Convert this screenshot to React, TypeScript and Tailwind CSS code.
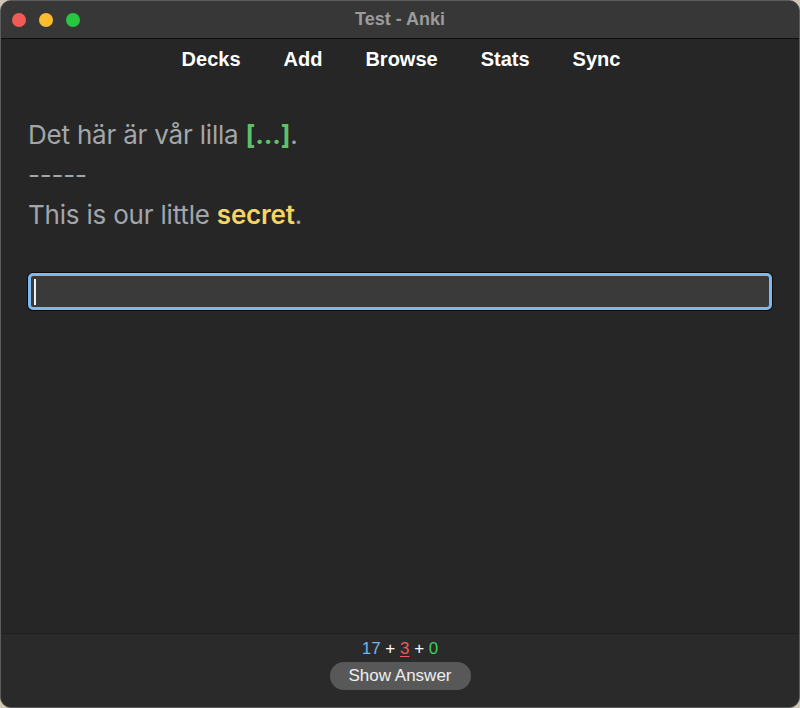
import React from "react";

export default function App() {
  return (
    <div className="w-[800px] h-[708px] bg-[#cfc6b6]">
      <div className="w-[800px] h-[708px] rounded-[11px] overflow-hidden border border-[#5c5c5c] flex flex-col bg-[#262626]">
        {/* Title bar */}
        <div className="h-[38px] shrink-0 bg-[#373737] border-b border-[#0e0e0e] flex items-center relative">
          <div className="flex items-center gap-[13px] pl-[11px]">
            <div className="w-[14px] h-[14px] rounded-full bg-[#f05b56]" />
            <div className="w-[14px] h-[14px] rounded-full bg-[#fbbd2e]" />
            <div className="w-[14px] h-[14px] rounded-full bg-[#27c840]" />
          </div>
          <div className="absolute inset-0 flex items-center justify-center pointer-events-none">
            <span className="font-['Liberation_Sans',Arial,sans-serif] font-bold text-[18px] text-[#9b9b9b]">Test - Anki</span>
          </div>
        </div>
        {/* Toolbar */}
        <div className="h-[42px] shrink-0 flex items-center justify-center gap-[43px] font-['Liberation_Sans',Arial,sans-serif] font-bold text-[20px] text-white pl-[2px] pb-[2px]">
          <span>Decks</span>
          <span>Add</span>
          <span>Browse</span>
          <span>Stats</span>
          <span>Sync</span>
        </div>
        {/* Card */}
        <div className="flex-1 px-[27px] pt-[34px] font-['Inter',sans-serif] text-[26px] leading-[40px] text-[#a2a6ab] tracking-[-0.2px]">
          <div>
            Det här är vår lilla <span className="font-bold text-[#5fc06c]">[...]</span>.
          </div>
          <div>-----</div>
          <div>
            This is our little <span className="font-semibold text-[#f6d565]">secret</span>.
          </div>
          <div className="mt-[38px] h-[37px] rounded-[5px] border-[3px] border-[#7db9f0] bg-[#3a3a3a] flex items-center pl-[3px] shadow-[0_0_0_1px_#0a0a0a]">
            <div className="w-[2px] h-[26px] bg-[#f0f0f0]" />
          </div>
        </div>
        {/* Bottom bar */}
        <div className="h-[74px] shrink-0 bg-[#2a2a2a] border-t border-[#202020] flex flex-col items-center pt-[4px] font-['Liberation_Sans',Arial,sans-serif]">
          <div className="text-[17px] leading-[22px] text-white">
            <span className="text-[#76b2ee]">17</span>
            <span> + </span>
            <span className="text-[#ec5a5a] underline underline-offset-2">3</span>
            <span> + </span>
            <span className="text-[#3ecb5f]">0</span>
          </div>
          <div className="mt-[2px] w-[141px] h-[28px] rounded-full bg-[#585858] flex items-center justify-center text-[17px] text-[#efefef]">
            Show Answer
          </div>
        </div>
      </div>
    </div>
  );
}
